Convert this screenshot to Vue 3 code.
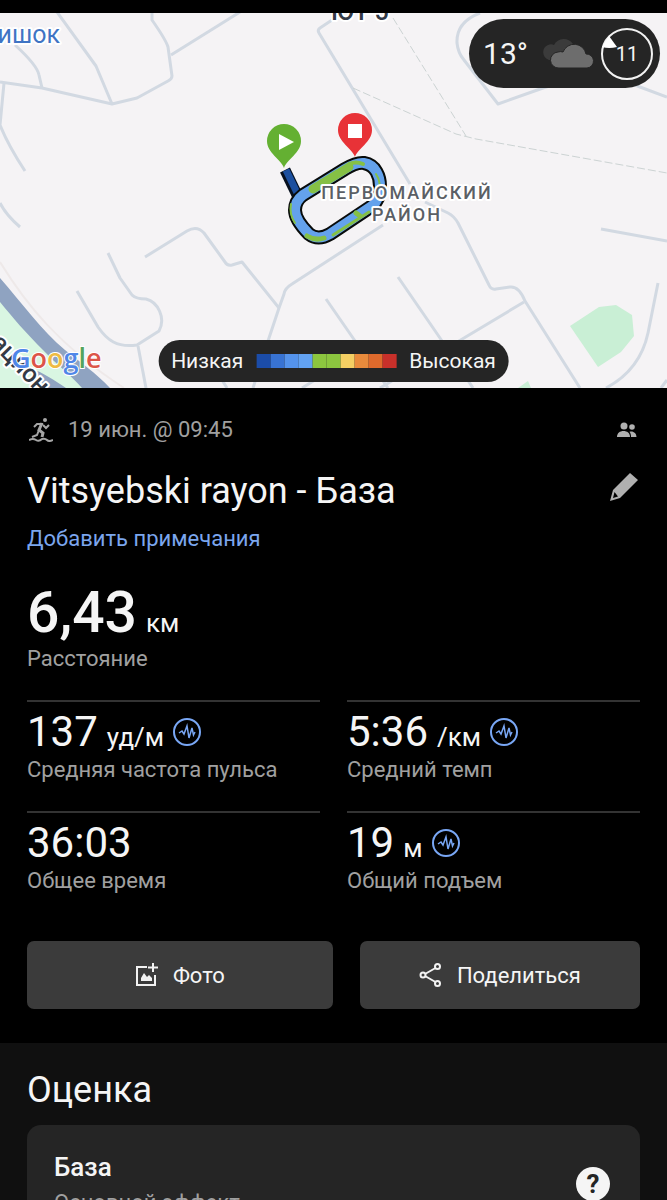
<template>
  <main class="activity">
    <section class="map">
      <svg class="map-canvas" viewBox="0 13 667 375" preserveAspectRatio="xMidYMid slice" role="img" aria-label="Карта маршрута">
        <rect y="12" width="667" height="376" fill="#f5f3f5" />

        <!-- river bank and water -->
        <path d="M0 262C26 304 58 345 124 388" fill="none" stroke="#eee9e9" stroke-width="2" />
        <path d="M0 300L43 348L84 388H0Z" fill="#d9f6e2" />
        <path d="M0 278C22 303 42 331 65 350C80 362 96 373 110 388H82C70 374 56 364 43 350C26 333 13 318 0 302Z" fill="#8fa3c1" />
        <path d="M30 368C44 373 54 380 66 388H46Z" fill="#8fa3c1" />

        <!-- parks -->
        <path d="M570 326L599 307L616 305L632 315L634 336L621 352L598 367Z" fill="#c9efd5" />
        <path d="M518 388L528 381L531 388Z" fill="#c9efd5" />

        <g class="roads">
          <path v-for="(d, i) in roads" :key="i" :d="d" />
        </g>
        <g class="trails">
          <path d="M393 18L466 136" />
          <path d="M353 88L456 134L476 139L667 173" />
        </g>

        <!-- activity track -->
        <path d="M285 170L299 199" fill="none" stroke="#07101f" stroke-width="11" />
        <path d="M286 170L300 199" fill="none" stroke="#1c4f9f" stroke-width="7" />
        <path :d="track" fill="none" stroke="#080b0a" stroke-width="14" />
        <path :d="track" fill="none" stroke="#64a2ec" stroke-width="10" />
        <g fill="none" stroke="#85c045" stroke-linecap="round">
          <path d="M313 189L349 167" stroke-width="9" />
          <path d="M349 164Q356 161 363 164" stroke-width="4" />
          <path d="M376 174Q382 183 378 192" stroke-width="2" />
          <path d="M291 204Q289 214 295 223" stroke-width="2" />
          <path d="M307 236Q315 241 324 238" stroke-width="5" />
          <path d="M333 235L369 212" stroke-width="3" />
          <path d="M356 213L360 216" stroke-width="5" />
        </g>

        <text class="place-label" x="407" y="199">ПЕРВОМАЙСКИЙ</text>
        <text class="place-label" x="407" y="221">РАЙОН</text>
        <text class="town-label" x="60" y="43">ишок</text>
        <text class="street-label" x="331" y="20">ЮТ-5</text>
        <text class="street-label" transform="translate(-10 344) rotate(46)">ацион</text>
        <text class="google" x="11" y="368"><tspan fill="#4f86e8">G</tspan><tspan fill="#dc5548">o</tspan><tspan fill="#eebb43">o</tspan><tspan fill="#4f86e8">g</tspan><tspan fill="#54a35b">l</tspan><tspan fill="#dc5548">e</tspan></text>

        <!-- start and finish pins -->
        <path :d="pin" transform="translate(284 168)" fill="#64b032" />
        <path d="M279 134L294 142L279 150Z" fill="#fff" />
        <path :d="pin" transform="translate(355 157)" fill="#e83237" />
        <path d="M348 124H362V138H348Z" fill="#fff" />
      </svg>

      <div class="weather">
        <span class="temperature">13°</span>
        <svg class="clouds" viewBox="0 0 54 32" aria-hidden="true">
          <path d="M9 22A8 8 0 0 1 8 7A7 7 0 0 1 14 7A11 11 0 0 1 33 6L25 22Z" fill="#3b3b3b" />
          <path d="M19 30A8 8 0 0 1 18 14A8 8 0 0 1 23 14A12 12 0 0 1 46 16A7 7 0 0 1 47 30Z" fill="#6d6d6d" stroke="#252525" stroke-width="1" />
        </svg>
        <div class="wind">
          <svg class="wind-dial" viewBox="0 0 54 54" aria-hidden="true">
            <circle cx="27" cy="27" r="25" fill="none" stroke="#f2f2f2" stroke-width="2" />
            <path d="M9 9L2 20Q9 22 17 20Z" fill="#fff" />
          </svg>
          <span>11</span>
        </div>
      </div>

      <div class="legend">
        <span>Низкая</span>
        <div class="scale">
          <i v-for="(c, i) in scale" :key="i" :style="{ background: c }"></i>
        </div>
        <span>Высокая</span>
      </div>
    </section>

    <section class="summary">
      <div class="meta">
        <svg class="icon-run" viewBox="0 0 24 24" aria-hidden="true">
          <circle cx="16" cy="2" r="2" fill="#a6a6a6" />
          <path d="M13 5L10 12L14 15L13 19" stroke-width="3" />
          <path d="M14 6L8 6L5 9M14 7L17 10L20 7M10 12L8 17L3 19" stroke-width="2" />
          <path d="M0 22Q4 20 7 22T13 21Q16 20 18 22T24 22" stroke-width="2" />
        </svg>
        <span class="date">19 июн. @ 09:45</span>
        <svg class="icon-people" viewBox="0 0 20 16" aria-hidden="true">
          <circle cx="7" cy="4" r="3.500" />
          <circle cx="15" cy="5" r="2.800" />
          <path d="M0 15C0 11 3 9 6.500 9S13 11 13 15Z" />
          <path d="M14 15C14 12.500 13.500 11 12.500 9.700C16 8.500 19.500 11 19.500 15Z" />
        </svg>
      </div>

      <div class="title-row">
        <h1>Vitsyebski rayon - База</h1>
        <button class="edit" aria-label="Изменить название">
          <svg viewBox="0 0 28 28" aria-hidden="true">
            <path fill-rule="evenodd" d="M20 0L28 7L10 25L0 28L3 17ZM4.500 19L3 25L8 23.500Z" />
          </svg>
        </button>
      </div>
      <a class="notes" href="#">Добавить примечания</a>

      <div class="distance">
        <div class="distance-value">
          <strong>6,43</strong>
          <span class="unit">км</span>
        </div>
        <div class="label">Расстояние</div>
      </div>

      <div class="stats">
        <div v-for="s in stats" :key="s.label" class="stat">
          <div class="stat-value">
            <span>{{ s.value }}</span>
            <span v-if="s.unit" class="unit">{{ s.unit }}</span>
            <svg v-if="s.chart" class="icon-pulse" viewBox="0 0 28 28" aria-hidden="true">
              <circle cx="14" cy="14" r="13" stroke-width="2" />
              <path d="M6 15L9 13L11 16L14 8L16 20L19 10L20.500 17L22 14" stroke-width="1.500" />
            </svg>
          </div>
          <div class="label">{{ s.label }}</div>
        </div>
      </div>

      <div class="actions">
        <button class="action">
          <svg viewBox="0 0 24 24" aria-hidden="true">
            <path d="M12 4H2V22H20V12" fill="none" stroke="#f2f2f2" stroke-width="2" />
            <path d="M18 0V9M13 4.500H23" fill="none" stroke="#f2f2f2" stroke-width="2" />
            <path d="M6 18V15L9 10L12 14L14 12L17 15V18Z" fill="#f2f2f2" />
          </svg>
          Фото
        </button>
        <button class="action">
          <svg viewBox="0 0 24 24" fill="none" stroke="#f2f2f2" stroke-width="2" aria-hidden="true">
            <circle cx="4" cy="12" r="2.500" />
            <circle cx="18.500" cy="3.500" r="2.500" />
            <circle cx="18.500" cy="20.500" r="2.500" />
            <path d="M6 11L16.500 5M6 13L16.500 19" />
          </svg>
          Поделиться
        </button>
      </div>
    </section>

    <section class="rating">
      <h2>Оценка</h2>
      <div class="card">
        <div>
          <h3>База</h3>
          <p class="label">Основной эффект</p>
        </div>
        <button class="help" aria-label="Справка">?</button>
      </div>
    </section>
  </main>
</template>

<script setup>
const scale = [
  '#1b4ca8', '#3873d3', '#5493ec', '#62a2f2', '#8cc63f',
  '#8cc63f', '#f4cf63', '#e98b3c', '#df6a2c', '#c8302a',
]

const stats = [
  { value: '137', unit: 'уд/м', label: 'Средняя частота пульса', chart: true },
  { value: '5:36', unit: '/км', label: 'Средний темп', chart: true },
  { value: '36:03', unit: '', label: 'Общее время', chart: false },
  { value: '19', unit: 'м', label: 'Общий подъем', chart: true },
]

const pin = 'M0 0C-3 -9 -17 -15 -17 -27A17 17 0 0 1 17 -27C17 -15 3 -9 0 0Z'

const track =
  'M303 195L345 169Q357 162 364 163C376 165 380 177 380 186Q380 200 372 206' +
  'L330 234Q318 241 309 234Q295 220 295 210Q295 201 303 195Z'

const roads = [
  'M0 82L42 88L112 104L137 98L168 81Q172 79 172 76L168 47Q166 40 152 20V12',
  'M57 12L96 66L112 104',
  'M171 55L240 12',
  'M15 45Q37 65 39 75L42 88',
  'M4 83L0 125Q8 145 25 171',
  'M0 203Q6 215 20 227',
  'M332 20L320 28Q317 30 319 33L410 184',
  'M480 13Q456 22 457 43Q458 53 464 60L498 104L543 88L600 70L640 87L667 97',
  'M601 229L667 241',
  'M425 202L448 213Q454 216 458 223L489 285Q491 290 496 289L510 287Q519 286 525 301L580 388',
  'M524 302L464 338L380 388',
  'M398 277L440 338L473 388',
  'M383 225L292 284Q285 288 284 294L279 308L269 338L253 388',
  'M326 299L353 338L388 388',
  'M145 257L187 231Q197 225 204 233L225 262Q227 266 232 265L242 262L279 308',
  'M108 253L120 278L132 295Q136 299 146 299C158 302 166 318 159 331L137 345C117 348 107 340 98 327L77 291',
  'M138 346L146 388',
  'M222 380L227 388',
  'M302 388L315 380',
  'M658 283L648 333Q640 370 606 388',
  'M661 388L667 380',
]
</script>

<style>
html,
body {
  margin: 0;
  background: #000;
}
</style>

<style scoped>
.activity {
  height: 100vh;
  overflow: hidden;
  box-sizing: border-box;
  padding-top: 13px;
  background: #000;
  color: #f5f5f5;
  font-family: Roboto, 'Noto Sans', sans-serif;
}

h1,
h2,
h3,
p {
  margin: 0;
  font-weight: 400;
}

button {
  border: none;
  padding: 0;
  font: inherit;
  color: inherit;
  cursor: pointer;
}

/* Map */
.map {
  position: relative;
}

.map-canvas {
  display: block;
  width: 100%;
  aspect-ratio: 667 / 375;
}

.roads path {
  fill: none;
  stroke: #d2d9e2;
  stroke-width: 3px;
  stroke-linejoin: round;
}

.trails path {
  fill: none;
  stroke: #ccd3d3;
  stroke-width: 1px;
  stroke-dasharray: 8 3;
}

.place-label,
.town-label,
.street-label,
.google {
  paint-order: stroke;
  stroke: #fff;
  stroke-width: 4px;
  stroke-linejoin: round;
}

.place-label {
  font-size: 18px;
  font-weight: 500;
  letter-spacing: 2px;
  text-anchor: middle;
  fill: #5b5f65;
}

.town-label {
  font-size: 25px;
  text-anchor: end;
  fill: #3f74c4;
}

.street-label {
  font-size: 25px;
  font-weight: 500;
  fill: #333a46;
}

.google {
  font-family: 'Open Sans', sans-serif;
  font-size: 27px;
  font-weight: 600;
  stroke-width: 2px;
}

.weather {
  position: absolute;
  top: 6px;
  right: 7px;
  display: flex;
  align-items: center;
  height: 69px;
  padding: 0 6px 0 14px;
  border-radius: 35px;
  background: #252525;
  box-sizing: border-box;
}

.temperature {
  font-size: 30px;
}

.clouds {
  width: 54px;
  height: 32px;
  margin: 0 6px 0 12px;
}

.wind {
  display: grid;
  place-items: center;
  font-size: 20px;
}

.wind > * {
  grid-area: 1 / 1;
}

.wind-dial {
  width: 54px;
  height: 54px;
}

.legend {
  position: absolute;
  bottom: 6px;
  left: 50%;
  transform: translateX(-50%);
  display: flex;
  align-items: center;
  gap: 13px;
  height: 42px;
  padding: 0 13px;
  border-radius: 21px;
  background: #252525;
  font-size: 21px;
}

.scale {
  display: flex;
}

.scale i {
  width: 14px;
  height: 14px;
}

/* Summary */
.summary {
  padding: 28px 27px 34px;
}

.meta {
  display: flex;
  align-items: center;
  color: #a0a0a0;
  font-size: 22px;
  line-height: 28px;
}

.icon-run {
  width: 24px;
  height: 24px;
  margin: 0 15px 0 2px;
  fill: none;
  stroke: #a6a6a6;
}

.icon-run circle {
  stroke: none;
}

.date {
  flex: 1;
}

.icon-people {
  width: 20px;
  height: 16px;
  margin-right: 3px;
  fill: #b0b0b0;
}

.title-row {
  display: flex;
  justify-content: space-between;
  margin-top: 25px;
}

h1,
h2 {
  font-size: 36px;
  line-height: 44px;
}

.edit {
  width: 28px;
  height: 28px;
  margin: 4px 2px 0 0;
  background: none;
}

.edit svg {
  display: block;
  fill: #b0b0b0;
}

.notes {
  display: block;
  width: fit-content;
  margin-top: 12px;
  color: #7ba6ee;
  font-size: 22px;
  line-height: 28px;
  text-decoration: none;
}

.distance {
  margin-top: 28px;
}

.distance-value {
  display: flex;
  align-items: baseline;
  gap: 9px;
  line-height: 64px;
}

.distance-value strong {
  font-size: 57px;
  font-weight: 500;
}

.unit {
  font-size: 26px;
  line-height: 28px;
}

.label {
  color: #a0a0a0;
  font-size: 22px;
  line-height: 28px;
}

.stats {
  display: grid;
  grid-template-columns: 1fr 1fr;
  gap: 27px;
  margin-top: 27px;
}

.stat {
  border-top: 2px solid #333;
  padding-top: 6px;
}

.stat-value {
  display: flex;
  align-items: baseline;
  gap: 9px;
  font-size: 42px;
  line-height: 48px;
}

.icon-pulse {
  align-self: center;
  width: 28px;
  height: 28px;
  fill: none;
  stroke: #79a7f5;
}

.actions {
  display: grid;
  grid-template-columns: 12fr 11fr;
  gap: 27px;
  margin-top: 46px;
}

.action {
  display: flex;
  align-items: center;
  justify-content: center;
  gap: 14px;
  height: 68px;
  border-radius: 7px;
  background: #3b3b3b;
  font-size: 22px;
}

.action svg {
  width: 24px;
  height: 24px;
}

/* Rating */
.rating {
  padding: 25px 27px;
  background: #101010;
}

.card {
  display: flex;
  justify-content: space-between;
  margin-top: 13px;
  padding: 26px 30px 27px 27px;
  border-radius: 14px;
  background: #252525;
}

h3 {
  font-size: 26px;
  font-weight: 500;
  line-height: 32px;
}

.card .label {
  margin-top: 6px;
}

.help {
  width: 34px;
  height: 34px;
  margin-top: 16px;
  border-radius: 50%;
  background: #f5f5f5;
  color: #252525;
  font-size: 26px;
  font-weight: 700;
  line-height: 34px;
}
</style>
